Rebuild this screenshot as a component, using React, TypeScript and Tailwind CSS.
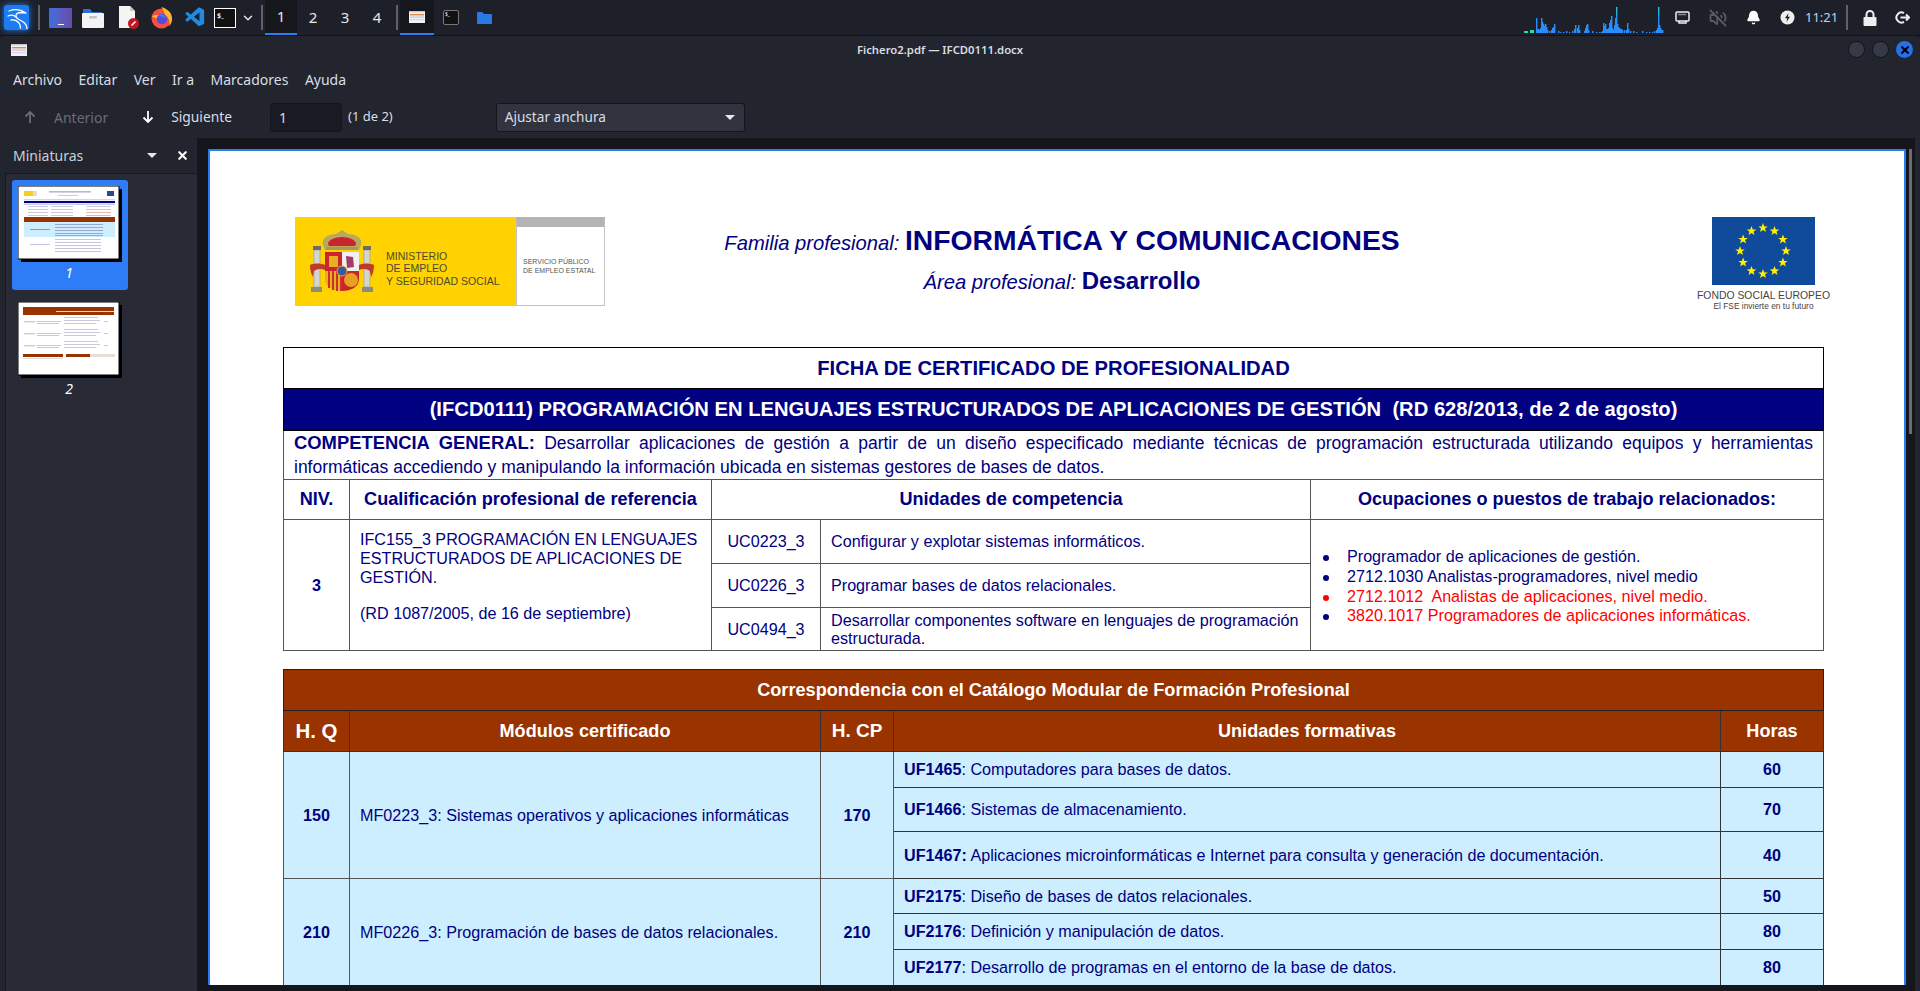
import { Bell, ChevronDown, VolumeOff, X } from "lucide-react";
import { VscVscode } from "react-icons/vsc";

const UI_FONT = "font-['Noto_Sans',sans-serif]";

// x offset, height of each bar in the network graph
const NET_BARS: [number, number][] = [
  [12, 15], [13, 4], [14, 4], [15, 3], [16, 5], [17, 15], [18, 11], [19, 9], [20, 7], [21, 9], [22, 6], [23, 3],
  [25, 2], [27, 3], [28, 5], [29, 6], [30, 9], [34, 2], [36, 1], [39, 1], [42, 2], [45, 1], [48, 2], [50, 4], [51, 8],
  [53, 5], [54, 8], [55, 3], [60, 2], [61, 5], [62, 8], [63, 9], [64, 3], [68, 2], [72, 1], [75, 1], [77, 1], [78, 2],
  [79, 10], [80, 7], [81, 9], [82, 4], [83, 4], [84, 5], [85, 10], [86, 13], [87, 17], [88, 5], [89, 3], [90, 8], [91, 15],
  [92, 26], [93, 9], [94, 6], [95, 5], [96, 4], [97, 4], [98, 3], [100, 3], [102, 3], [103, 10], [104, 4], [106, 2], [109, 2],
  [112, 1], [118, 2], [122, 1], [125, 1], [128, 1], [130, 2], [132, 3], [133, 5], [134, 26], [135, 8], [136, 5], [137, 3], [138, 3],
];

function NetGraph() {
  return (
    <svg width="140" height="28" viewBox="0 0 140 28" className="shrink-0">
      <defs>
        <linearGradient id="net" gradientUnits="userSpaceOnUse" x1="0" y1="2" x2="0" y2="14">
          <stop offset="0" stopColor="#19d3c5" />
          <stop offset="1" stopColor="#2a8cff" />
        </linearGradient>
      </defs>
      <rect x="0" y="26" width="4" height="2" fill="#1fe0b0" />
      <rect x="6" y="25" width="4" height="3" fill="#1fe0b0" />
      {NET_BARS.map(([x, h]) => (
        <rect key={x} x={x} y={28 - h} width="1.4" height={h} fill="url(#net)" />
      ))}
    </svg>
  );
}

function KaliLogo() {
  return (
    <div className="w-[25px] h-[25px] rounded-[3px] bg-[#1d7cf2] shadow-[0_0_6px_#1d7cf2] flex items-center justify-center">
      <svg width="25" height="25" viewBox="0 0 25 25" fill="none" stroke="#fff" strokeWidth="1.3" strokeLinecap="round" strokeLinejoin="round">
        <path d="M5 6c5-2 11-2 17 2l-5-.5c-3 0-5.500 1-5 4 .5 3 5 3.500 8 6 2 1.800 3 4 3 6" />
        <path d="M4 11c3-1.500 6-1 8 1M7 15c3-.5 6 .5 8 3 1 1.500 1.500 3 1.500 5" />
      </svg>
    </div>
  );
}

function Firefox() {
  return (
    <svg width="23" height="23" viewBox="0 0 24 24">
      <circle cx="12" cy="13" r="10.5" fill="#f2513c" />
      <path d="M12 1c6 2 11 6 11 12 0 3-1 6-3 8 1-4 0-9-4-11-1-3-2-6-4-9z" fill="#ffb52e" />
      <path d="M2 11c3-2 6-2 9-1l-4 3-5-2z" fill="#ffb52e" />
      <circle cx="12.500" cy="13.500" r="5.500" fill="#5a4be0" />
      <path d="M8 10c3-2 8-1 9 3-3-2-6-2-9-3z" fill="#2f8cf0" />
    </svg>
  );
}

function FilesIcon() {
  return (
    <svg width="22" height="20" viewBox="0 0 22 20">
      <path d="M1 2a1 1 0 0 1 1-1h6l2 3h10v3H1z" fill="#2a6fd8" />
      <rect x="0" y="5" width="22" height="15" rx="1" fill="#f4f4f4" />
      <rect x="7" y="8" width="8" height="2.500" rx="1" fill="#c4c4c4" />
    </svg>
  );
}

function DocIcon() {
  return (
    <svg width="21" height="23" viewBox="0 0 21 23">
      <path d="M1 0h11l5 5v17H1z" fill="#f4f4f4" />
      <path d="M12 0l5 5h-5z" fill="#c8c8c8" />
      <circle cx="15.500" cy="17.500" r="5.500" fill="#c8141e" />
      <path d="M13.500 19.500l4-4" stroke="#fff" strokeWidth="1.600" />
    </svg>
  );
}

function PdfMini({ size = 16 }: { size?: number }) {
  return (
    <svg width={size} height={(size * 3) / 4} viewBox="0 0 16 12">
      <rect width="16" height="12" fill="#f3f3f3" />
      <rect y="0" width="16" height="1.400" fill="#c9c9d6" />
      <rect x="1" y="3" width="14" height="1.400" fill="#d98a4a" />
      <rect x="1" y="5.500" width="14" height="1.200" fill="#b9c6e6" />
      <rect x="1" y="8" width="14" height="1.200" fill="#d8d0e6" />
    </svg>
  );
}

function Sep() {
  return <div className="w-[2px] h-[25px] bg-[#5f6068] shrink-0" />;
}

function Taskbar() {
  return (
    <div className={`h-[35px] shrink-0 bg-[#1e2029] flex items-center ${UI_FONT} text-[#e8e8e8]`}>
      <div className="ml-1 mr-[9px]"><KaliLogo /></div>
      <Sep />
      <div className="flex items-center ml-2 w-[213px] shrink-0">
        <div className="w-[23px] h-[20px] ml-[1px] rounded-[1px] bg-gradient-to-r from-[#3c6ee0] to-[#6a4ba8] flex items-end justify-center pb-[3px] shrink-0">
          <div className="w-[6px] h-[1px] bg-white" />
        </div>
        <div className="ml-[10px]"><FilesIcon /></div>
        <div className="ml-[14px]"><DocIcon /></div>
        <div className="ml-[11px]"><Firefox /></div>
        <VscVscode className="ml-[11px] text-[#1f8ce0] shrink-0" size={23} />
        <div className="ml-[7px] w-[22px] h-[20px] border border-white bg-[#111] text-[7px] leading-[9px] font-bold pl-[2px] pt-[2px] shrink-0">$_</div>
        <ChevronDown className="ml-[5px] shrink-0" size={14} strokeWidth={2.400} />
      </div>
      <Sep />
      <div className="flex items-center ml-[2px] text-[15px]">
        <div className="w-[32px] h-[35px] bg-[#16171d] border-b-2 border-[#2a7cf0] flex items-center justify-center">1</div>
        <div className="w-[32px] text-center">2</div>
        <div className="w-[32px] text-center">3</div>
        <div className="w-[32px] text-center">4</div>
      </div>
      <div className="ml-[3px]"><Sep /></div>
      <div className="ml-[2px] w-[34px] h-[35px] bg-[#16171d] border-b-2 border-[#2a7cf0] flex items-center justify-center">
        <PdfMini />
      </div>
      <div className="ml-[9px] w-[16px] h-[15px] rounded-[2px] border border-[#777] bg-[#111] text-[5px] leading-[6px] pl-[1px] text-white">$_</div>
      <svg className="ml-[18px]" width="15" height="12" viewBox="0 0 15 12">
        <path d="M0 1a1 1 0 0 1 1-1h4l2 2h7a1 1 0 0 1 1 1v8a1 1 0 0 1-1 1H1a1 1 0 0 1-1-1z" fill="#2a78e8" />
      </svg>
      <div className="ml-auto mr-[11px] pt-[3px] flex"><NetGraph /></div>
      <div className="flex items-center pr-[10px]">
        <svg width="15" height="14" viewBox="0 0 15 14" fill="none" stroke="#eee" strokeWidth="1.500">
          <rect x="1" y="1" width="13" height="9" rx="1" />
          <path d="M4 10v2h7v-2" />
          <path d="M3.500 3.500h8" strokeDasharray="1 1" />
        </svg>
        <VolumeOff className="ml-[19px] text-[#5a5b62]" size={18} strokeWidth={2.400} />
        <Bell className="ml-[19px] text-white fill-white" size={15} />
        <svg className="ml-[19px]" width="15" height="15" viewBox="0 0 15 15">
          <circle cx="7.500" cy="7.500" r="7" fill="#eee" />
          <path d="M8.500 3L5 8.200h2.200L6.500 12 10 6.800H7.800z" fill="#1e2029" />
        </svg>
        <span className="ml-[10px] text-[13px] text-[#bcd2ea] w-[31px]">11:21</span>
        <div className="ml-[10px]"><Sep /></div>
        <svg className="ml-[15px]" width="14" height="16" viewBox="0 0 14 16">
          <path d="M3.500 7V4.500a3.500 3.500 0 0 1 7 0V7" fill="none" stroke="#eee" strokeWidth="2" />
          <rect x="0.500" y="7" width="13" height="9" rx="1" fill="#eee" />
        </svg>
        <svg className="ml-[18px]" width="15" height="13" viewBox="0 0 15 13" fill="none" stroke="#eee" strokeWidth="2">
          <path d="M9 2.200A5 5 0 1 0 9 10.800" />
          <path d="M5.500 6.500H14M11 3.500l3 3-3 3" />
        </svg>
      </div>
    </div>
  );
}

function Thumb1() {
  return (
    <svg width="104" height="76" viewBox="0 0 104 76" className="block">
      <rect x="3" y="3" width="101" height="73" fill="#000" />
      <rect x="0" y="0" width="101" height="73" fill="#fff" stroke="#000" strokeWidth="1" />
      <rect x="6" y="5" width="9" height="5" fill="#f5cf20" /><rect x="15" y="5" width="4" height="5" fill="#ddd" />
      <rect x="31" y="5" width="42" height="1.600" fill="#b8b8d8" /><rect x="40" y="9" width="20" height="1" fill="#c8c8e0" />
      <rect x="89" y="5" width="7" height="5" fill="#244a90" />
      <rect x="6" y="13" width="91" height="1.400" fill="#d4d4e4" />
      <rect x="6" y="15" width="91" height="2" fill="#000080" />
      <rect x="6" y="17.500" width="91" height="1.500" fill="#c8c8e0" />
      {[20, 23, 26, 29].map((y) => (
        <g key={y}>
          <rect x="10" y={y} width="20" height="1" fill="#c8c8e0" />
          <rect x="33" y={y} width="22" height="1" fill="#c8c8e0" />
          <rect x="68" y={y} width="25" height="1" fill={y > 25 ? "#f4b0b0" : "#c8c8e0"} />
        </g>
      ))}
      <rect x="6" y="31" width="91" height="5" fill="#993300" />
      <rect x="6" y="36" width="91" height="15" fill="#cceeff" />
      {[38, 41, 44, 47, 49].map((y) => <rect key={y} x="37" y={y} width="48" height="1" fill="#9aa8d0" />)}
      {[53, 56, 59, 62, 65].map((y) => <rect key={y} x="37" y={y} width="46" height="1" fill="#c4c4dc" />)}
      <rect x="12" y="43" width="20" height="1" fill="#8a98c4" />
      <rect x="12" y="58" width="20" height="1" fill="#c4c4dc" />
    </svg>
  );
}

function Thumb2() {
  return (
    <svg width="104" height="76" viewBox="0 0 104 76" className="block">
      <rect x="3" y="3" width="101" height="73" fill="#000" />
      <rect x="0" y="0" width="101" height="73" fill="#fff" stroke="#000" strokeWidth="1" />
      <rect x="5" y="5" width="91" height="8" fill="#993300" />
      <rect x="38" y="9" width="58" height="0.800" fill="#fff" />
      {[15, 27, 39].map((y) => (
        <g key={y}>
          <rect x="6" y={y + 4} width="11" height="1.400" fill="#ccc" />
          <rect x="19" y={y + 4} width="24" height="1" fill="#c8c8e0" />
          <rect x="19" y={y + 6} width="22" height="1" fill="#c8c8e0" />
          <rect x="46" y={y} width="34" height="1" fill="#c8c8e0" />
          <rect x="46" y={y + 3} width="36" height="1" fill="#c8c8e0" />
          <rect x="46" y={y + 6} width="32" height="1" fill="#c8c8e0" />
          <rect x="86" y={y + 4} width="4" height="1" fill="#ccc" />
        </g>
      ))}
      <rect x="5" y="52" width="40" height="3" fill="#993300" />
      <rect x="48" y="52" width="24" height="3" fill="#993300" />
      <rect x="72" y="52" width="25" height="3" fill="#e8dcd8" />
      <rect x="5" y="56" width="40" height="1" fill="#ddd" />
    </svg>
  );
}

function Sidebar() {
  return (
    <div className="w-[197px] shrink-0 flex flex-col">
      <div className="h-[35px] shrink-0 flex items-center pl-[13px] text-[14px] text-[#c8d0da]">
        <span>Miniaturas</span>
        <div className="ml-auto w-0 h-0 border-x-[5px] border-x-transparent border-t-[5px] border-t-[#e8e8e8]" />
        <X className="ml-[19px] mr-[8px] text-white" size={13} strokeWidth={4} />
      </div>
      <div className="flex-1 ml-[5px] bg-[#282a36] border-t border-l border-[#17181d] pt-[6px] pl-[6px]">
        <div className="w-[116px] h-[110px] rounded-[3px] bg-[#2e7cf6] pt-[6px] pl-[6px]">
          <Thumb1 />
          <div className="text-center pr-[8px] text-[14px] italic text-white">1</div>
        </div>
        <div className="w-[116px] h-[110px] mt-[12px] pl-[6px]">
          <Thumb2 />
          <div className="text-center pr-[8px] text-[14px] italic text-white">2</div>
        </div>
      </div>
    </div>
  );
}

function SpainArms() {
  return (
    <svg width="66" height="66" viewBox="0 0 66 66" className="shrink-0">
      <rect x="5" y="21" width="6" height="37" fill="#d4d4d4" stroke="#9a9a8a" strokeWidth="0.600" />
      <rect x="55" y="21" width="6" height="37" fill="#d4d4d4" stroke="#9a9a8a" strokeWidth="0.600" />
      <rect x="4" y="17" width="8" height="4" fill="#6c6c60" />
      <rect x="54" y="17" width="8" height="4" fill="#6c6c60" />
      <rect x="2" y="58" width="11" height="5" fill="#8c8c7c" />
      <rect x="53" y="58" width="11" height="5" fill="#8c8c7c" />
      <path d="M1 36c4-2 11-2 15 0v5c-5-2-8-1-11 1l-1 6c-2-3-3-8-3-12z" fill="#c0392b" />
      <path d="M65 36c-4-2-11-2-15 0v5c5-2 8-1 11 1l1 6c2-3 3-8 3-12z" fill="#c0392b" />
      <path d="M14 16c-2-7 5-11 13-11l6-4 6 4c8 0 15 4 13 11l-2 5H16z" fill="#b8a860" />
      <path d="M19 15c0-4 7-7 14-7s14 3 14 7l-1 2H20z" fill="#c8252c" />
      <rect x="17" y="18" width="32" height="3" fill="#a89850" />
      <path d="M16 23h17v19H16z" fill="#c8252c" />
      <path d="M33 23h17v19H33z" fill="#f0f0f0" />
      <path d="M16 42h17v20c-7 0-17-3-17-12z" fill="#e8b020" />
      <path d="M33 42h17v8c0 9-10 12-17 12z" fill="#c8252c" />
      <path d="M20 42v17M24 42v19M28 42v20M32 42v20" stroke="#c8252c" strokeWidth="1.800" />
      <rect x="20" y="27" width="9" height="11" fill="#e8b020" />
      <path d="M37 27l7 1 1 10-7 1z" fill="#a83a6a" />
      <circle cx="42" cy="51" r="7" fill="#e8a020" />
      <circle cx="33" cy="42" r="5" fill="#3a5aa0" stroke="#e8b020" />
    </svg>
  );
}

function SpainLogo() {
  return (
    <div className="flex w-[310px] h-[89px] shrink-0">
      <div className="w-[221px] bg-[#ffd200] flex items-center pl-[14px]">
        <SpainArms />
        <div className="ml-[11px] mt-[14px] text-[10.500px] leading-[12.400px] text-[#4d4a30] whitespace-nowrap">
          MINISTERIO<br />DE EMPLEO<br />Y SEGURIDAD SOCIAL
        </div>
      </div>
      <div className="flex-1 border-x border-b border-[#c4c4c4] border-t-[10px] border-t-[#b4b4b4] pl-[6px] pt-[30px] text-[7px] leading-[9.400px] text-[#555] whitespace-nowrap">
        SERVICIO PÚBLICO<br />DE EMPLEO ESTATAL
      </div>
    </div>
  );
}

function EuFlag() {
  const stars = Array.from({ length: 12 }, (_, i) => {
    const a = (i * Math.PI) / 6;
    return [51 + 23 * Math.sin(a), 34 - 23 * Math.cos(a)];
  });
  return (
    <svg width="103" height="68" viewBox="0 0 103 68" className="shrink-0">
      <rect width="103" height="68" fill="#0f4b9a" />
      {stars.map(([x, y], i) => (
        <polygon
          key={i}
          fill="#ffee00"
          transform={`translate(${x} ${y})`}
          points="0,-5 1.300,-1.600 4.800,-1.500 2,0.600 3,4 0,2 -3,4 -2,0.600 -4.800,-1.500 -1.300,-1.600"
        />
      ))}
    </svg>
  );
}

const td = "border border-[#555]";
const uf = "border border-[#333] pl-[10px] text-left";
const hours = "border border-[#333] text-center font-bold";

const OCCUPATIONS = [
  { text: "Programador de aplicaciones de gestión.", color: "text-[#000080]", dot: "bg-[#000080]" },
  { text: "2712.1030 Analistas-programadores, nivel medio", color: "text-[#000080]", dot: "bg-[#000080]" },
  { text: "2712.1012  Analistas de aplicaciones, nivel medio.", color: "text-[#ff0000]", dot: "bg-[#ff0000]" },
  { text: "3820.1017 Programadores de aplicaciones informáticas.", color: "text-[#ff0000]", dot: "bg-[#000080]" },
];

function CertTable() {
  return (
    <table className="table-fixed border-collapse w-[1540px] ml-[73px] mt-[41px] text-[#000080] text-[16.150px]">
      <colgroup>
        <col className="w-[66px]" /><col className="w-[362px]" /><col className="w-[109px]" /><col className="w-[490px]" /><col className="w-[513px]" />
      </colgroup>
      <tbody>
        <tr className="h-[41px]">
          <td colSpan={5} className="border border-black text-center font-bold text-[20.200px]">FICHA DE CERTIFICADO DE PROFESIONALIDAD</td>
        </tr>
        <tr className="h-[42px]">
          <td colSpan={5} className="border border-black bg-[#000080] text-white text-center font-bold text-[20.200px] whitespace-pre">(IFCD0111) PROGRAMACIÓN EN LENGUAJES ESTRUCTURADOS DE APLICACIONES DE GESTIÓN  (RD 628/2013, de 2 de agosto)</td>
        </tr>
        <tr className="h-[49px]">
          <td colSpan={5} className={`${td} px-[10px] text-[17.500px] leading-[24px] text-justify`}>
            <b className="text-[18.400px]">COMPETENCIA GENERAL:</b> Desarrollar aplicaciones de gestión a partir de un diseño especificado mediante técnicas de programación estructurada utilizando equipos y herramientas informáticas accediendo y manipulando la información ubicada en sistemas gestores de bases de datos.
          </td>
        </tr>
        <tr className="h-[40px] text-center font-bold text-[18.100px]">
          <td className={td}>NIV.</td>
          <td className={td}>Cualificación profesional de referencia</td>
          <td colSpan={2} className={td}>Unidades de competencia</td>
          <td className={td}>Ocupaciones o puestos de trabajo relacionados:</td>
        </tr>
        <tr className="h-[44px]">
          <td rowSpan={3} className={`${td} text-center font-bold`}>3</td>
          <td rowSpan={3} className={`${td} px-[10px] align-top pt-[10px] leading-[18.800px]`}>
            IFC155_3 PROGRAMACIÓN EN LENGUAJES ESTRUCTURADOS DE APLICACIONES DE GESTIÓN.
            <div className="mt-[18px]">(RD 1087/2005, de 16 de septiembre)</div>
          </td>
          <td className={`${td} text-center`}>UC0223_3</td>
          <td className={`${td} px-[10px]`}>Configurar y explotar sistemas informáticos.</td>
          <td rowSpan={3} className={`${td} pl-[12px] pt-[3px] leading-[19.700px]`}>
            <ul>
              {OCCUPATIONS.map((o) => (
                <li key={o.text} className={`flex ${o.color}`}>
                  <span className={`w-[6px] h-[6px] rounded-full mt-[8px] mr-[18px] shrink-0 ${o.dot}`} />
                  <span className="whitespace-pre">{o.text}</span>
                </li>
              ))}
            </ul>
          </td>
        </tr>
        <tr className="h-[44px]">
          <td className={`${td} text-center`}>UC0226_3</td>
          <td className={`${td} px-[10px]`}>Programar bases de datos relacionales.</td>
        </tr>
        <tr className="h-[43px]">
          <td className={`${td} text-center`}>UC0494_3</td>
          <td className={`${td} px-[10px] leading-[18px]`}>Desarrollar componentes software en lenguajes de programación estructurada.</td>
        </tr>
      </tbody>
    </table>
  );
}

function ModuleRows({ hq, hcp, name, rows }: { hq: string; hcp: string; name: string; rows: [string, string, string, number][] }) {
  return (
    <>
      {rows.map(([code, text, h, height], i) => (
        <tr key={code} style={{ height }}>
          {i === 0 && (
            <>
              <td rowSpan={rows.length} className={`${td} text-center font-bold`}>{hq}</td>
              <td rowSpan={rows.length} className={`${td} px-[10px]`}>{name}</td>
              <td rowSpan={rows.length} className={`${td} text-center font-bold`}>{hcp}</td>
            </>
          )}
          <td className={uf}><b>{code}</b>{text}</td>
          <td className={hours}>{h}</td>
        </tr>
      ))}
    </>
  );
}

function CatalogTable() {
  return (
    <table className="table-fixed border-collapse w-[1540px] ml-[73px] mt-[18px] text-[#000080] text-[16.150px] bg-[#cceeff]">
      <colgroup>
        <col className="w-[66px]" /><col className="w-[471px]" /><col className="w-[73px]" /><col className="w-[827px]" /><col className="w-[103px]" />
      </colgroup>
      <tbody>
        <tr className="h-[41px] bg-[#993300] text-white">
          <td colSpan={5} className="border border-[#222] pt-[1px] text-center font-bold text-[18.150px]">Correspondencia con el Catálogo Modular de Formación Profesional</td>
        </tr>
        <tr className="h-[41px] bg-[#993300] text-white text-center font-bold text-[18.100px]">
          <td className="border border-[#333] pt-[1px] text-[20.500px]">H. Q</td>
          <td className="border border-[#333] pt-[1px]">Módulos certificado</td>
          <td className="border border-[#333] pt-[1px] text-[19px]">H. CP</td>
          <td className="border border-[#333] pt-[1px]">Unidades formativas</td>
          <td className="border border-[#333] pt-[1px]">Horas</td>
        </tr>
        <ModuleRows
          hq="150"
          hcp="170"
          name="MF0223_3: Sistemas operativos y aplicaciones informáticas"
          rows={[
            ["UF1465", ": Computadores para bases de datos.", "60", 36],
            ["UF1466", ": Sistemas de almacenamiento.", "70", 44],
            ["UF1467:", " Aplicaciones microinformáticas e Internet para consulta y generación de documentación.", "40", 47],
          ]}
        />
        <ModuleRows
          hq="210"
          hcp="210"
          name="MF0226_3: Programación de bases de datos relacionales."
          rows={[
            ["UF2175", ": Diseño de bases de datos relacionales.", "50", 35],
            ["UF2176", ": Definición y manipulación de datos.", "80", 36],
            ["UF2177", ": Desarrollo de programas en el entorno de la base de datos.", "80", 36],
          ]}
        />
      </tbody>
    </table>
  );
}

function PdfPage() {
  return (
    <div className="flex-1 min-w-0 h-[836px] bg-white border-t-2 border-x-2 border-[#2a7cf0] overflow-hidden font-['Liberation_Sans',sans-serif]">
      <div className="flex h-[155px] pt-[66px]">
        <div className="ml-[85px]"><SpainLogo /></div>
        <div className="w-[900px] ml-[7px] text-center text-[#000080] mt-[3px] shrink-0">
          <div className="leading-[41px] text-[20.200px] italic">Familia profesional: <b className="not-italic text-[28.300px]">INFORMÁTICA Y COMUNICACIONES</b></div>
          <div className="leading-[34px] text-[20.200px] italic">Área profesional: <b className="not-italic text-[24px]">Desarrollo</b></div>
        </div>
        <div className="ml-[185px] w-[133px] shrink-0 flex flex-col items-center text-[#444]">
          <EuFlag />
          <div className="mt-[5px] text-[10.400px] leading-[12px] whitespace-nowrap">FONDO SOCIAL EUROPEO</div>
          <div className="text-[8.400px] leading-[9px] whitespace-nowrap">El FSE invierte en tu futuro</div>
        </div>
      </div>
      <CertTable />
      <CatalogTable />
    </div>
  );
}

function Toolbar() {
  return (
    <div className="h-[42px] shrink-0 flex items-center text-[14px] text-[#d8dee6]">
      <svg className="ml-[24px]" width="12" height="12" viewBox="0 0 12 12" fill="none" stroke="#6a6c74" strokeWidth="1.800"><path d="M6 12V1M1.500 5.500L6 1l4.500 4.500" /></svg>
      <span className="ml-[18px] text-[#6a6c74]">Anterior</span>
      <svg className="ml-[34px]" width="12" height="12" viewBox="0 0 12 12" fill="none" stroke="#fff" strokeWidth="1.800"><path d="M6 0v11M1.500 6.500L6 11l4.500-4.500" /></svg>
      <span className="ml-[17px] text-[13.800px]">Siguiente</span>
      <div className="ml-[38px] w-[72px] h-[29px] rounded-[3px] bg-[#1a1b22] border border-[#14151a] pl-[8px] leading-[27px]">1</div>
      <span className="ml-[6px] text-[13px]">(1 de 2)</span>
      <div className="ml-[103px] w-[249px] h-[29px] rounded-[3px] bg-[#31343f] border border-[#14151a] flex items-center pl-[8px] text-[13.600px]">
        Ajustar anchura
        <div className="ml-auto mr-[9px] w-0 h-0 border-x-[5px] border-x-transparent border-t-[5px] border-t-[#e8e8e8]" />
      </div>
    </div>
  );
}

export default function App() {
  return (
    <div className="w-[1920px] h-[991px] overflow-hidden flex flex-col bg-[#15161b]">
      <Taskbar />
      <div className={`flex-1 min-h-0 flex flex-col bg-[#22242e] border-t border-[#111216] rounded-t-[3px] ${UI_FONT}`}>
        <div className="h-[28px] shrink-0 relative flex items-center justify-center pr-[40px] text-[11.300px] font-semibold text-[#d8dce2]">
          <div className="absolute left-[11px] top-[8px]"><PdfMini /></div>
          Fichero2.pdf — IFCD0111.docx
          <div className="absolute right-[7px] top-[5px] flex gap-[7px]">
            <div className="w-[17px] h-[17px] rounded-full bg-[#363a48] border border-[#111216]" />
            <div className="w-[17px] h-[17px] rounded-full bg-[#363a48] border border-[#111216]" />
            <div className="w-[17px] h-[17px] rounded-full bg-[#2670e8] flex items-center justify-center">
              <X className="text-black" size={12} strokeWidth={4} />
            </div>
          </div>
        </div>
        <div className="h-[32px] shrink-0 flex items-center pl-[13px] pb-[2px] gap-[16.500px] text-[14px] text-[#d8dee6]">
          <span>Archivo</span><span>Editar</span><span>Ver</span><span>Ir a</span><span>Marcadores</span><span>Ayuda</span>
        </div>
        <Toolbar />
        <div className="flex-1 min-h-0 flex">
          <Sidebar />
          <div className="flex-1 min-w-0 flex h-[853px] bg-[#15161b] mr-[5px] pl-[11px] pt-[11px] pr-[9px]">
            <PdfPage />
            <div className="ml-[3px] w-[3px] h-[285px] bg-[#6c6c6c] -mr-[6px] shrink-0" />
          </div>
        </div>
      </div>
    </div>
  );
}
